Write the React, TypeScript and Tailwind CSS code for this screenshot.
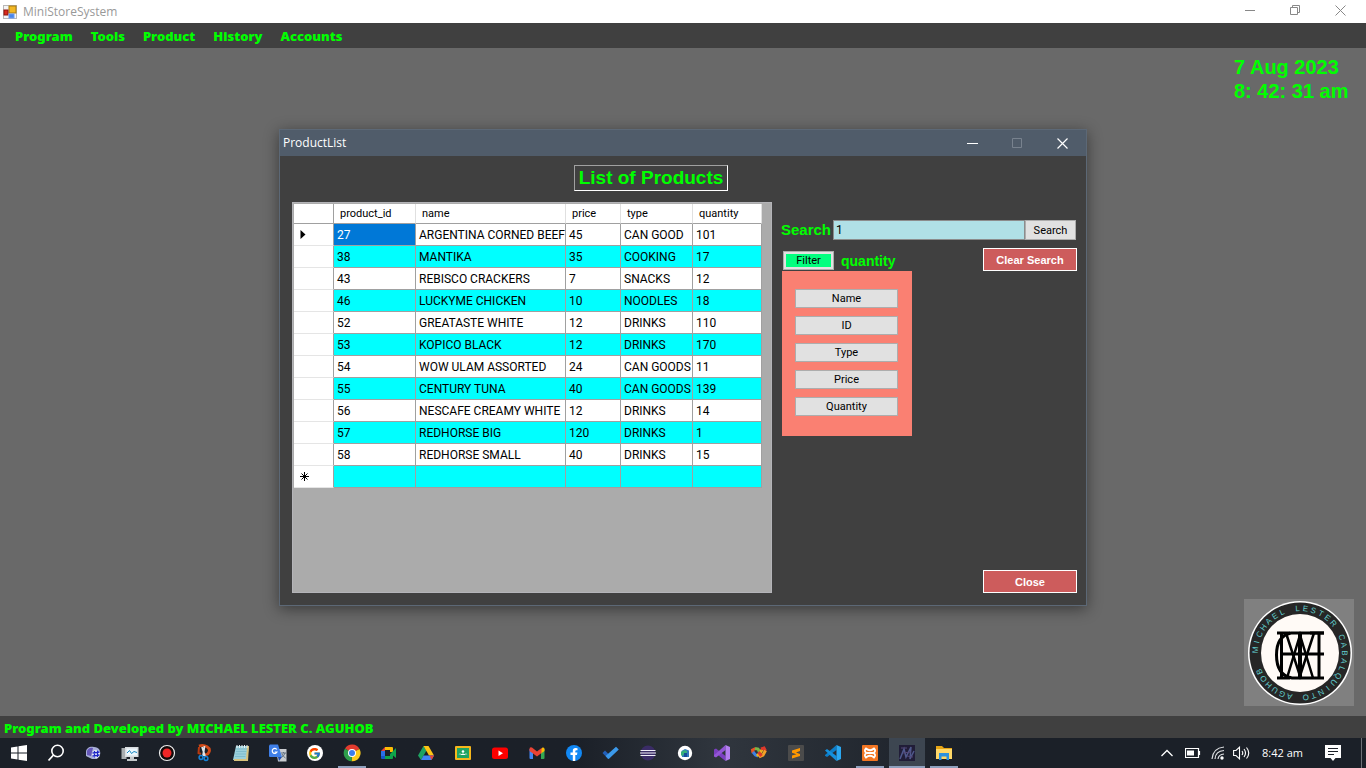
import type { ReactNode } from "react";
import { FcGoogle } from "react-icons/fc";

const menuItems = ["Program", "Tools", "Product", "History", "Accounts"];

const products = [
  ["27", "ARGENTINA CORNED BEEF", "45", "CAN GOOD", "101"],
  ["38", "MANTIKA", "35", "COOKING", "17"],
  ["43", "REBISCO CRACKERS", "7", "SNACKS", "12"],
  ["46", "LUCKYME CHICKEN", "10", "NOODLES", "18"],
  ["52", "GREATASTE WHITE", "12", "DRINKS", "110"],
  ["53", "KOPICO BLACK", "12", "DRINKS", "170"],
  ["54", "WOW ULAM ASSORTED", "24", "CAN GOODS", "11"],
  ["55", "CENTURY TUNA", "40", "CAN GOODS", "139"],
  ["56", "NESCAFE CREAMY WHITE", "12", "DRINKS", "14"],
  ["57", "REDHORSE BIG", "120", "DRINKS", "1"],
  ["58", "REDHORSE SMALL", "40", "DRINKS", "15"],
  ["", "", "", "", ""],
];

const columns = ["product_id", "name", "price", "type", "quantity"];
const filters = ["Name", "ID", "Type", "Price", "Quantity"];

function AppIcon() {
  return (
    <svg width="14" height="14" viewBox="0 0 14 14" aria-hidden="true">
      <rect x="0.5" y="0.5" width="13" height="13" fill="#f4f4f4" stroke="#b8b8b8" />
      <rect x="6" y="1" width="7" height="7" fill="#f2b824" stroke="#a87a10" />
      <rect x="1" y="5" width="4" height="5" fill="#d9281c" stroke="#8e140c" />
      <rect x="6" y="9" width="5" height="4" fill="#4a86e8" stroke="#6a9af0" />
    </svg>
  );
}

function Logo() {
  const ring = "MICHAEL LESTER CABALQUINTO AGUHOB";
  return (
    <svg width="110" height="107" viewBox="0 0 110 107" role="img" aria-label={ring}>
      <rect width="110" height="107" fill="#808080" />
      <circle cx="56" cy="54" r="52" fill="#ffffff" />
      <circle cx="56" cy="54" r="50.5" fill="#262626" />
      <circle cx="56" cy="54" r="39" fill="#fffaf6" />
      <g
        fill="#62cccc"
        fontFamily="Liberation Sans, sans-serif"
        fontSize="8"
        textAnchor="middle"
      >
        {ring.split("").map((ch, i) => (
          <text key={i} x="56" y="12" transform={`rotate(${-86 + i * 10.35} 56 54)`}>
            {ch}
          </text>
        ))}
      </g>
      <g fill="none" stroke="#000" strokeWidth="3">
        <path d="M37.500 33V79M75 33V79" />
        <path d="M33 34H46M66 34H80M33 79H46" strokeWidth="3" />
        <path d="M38 55H80" />
        <path d="M80 34H47C37 36 32.500 44 32.500 56S37 77 48 79H80" />
        <path d="M42 34L56 77L70 34" strokeWidth="2.500" />
        <path d="M43 79L56 36L69 79" strokeWidth="2.500" />
        <path d="M56 34V79" strokeWidth="4" />
      </g>
    </svg>
  );
}

function Ico({ children, size = 18 }: { children: ReactNode; size?: number }) {
  return (
    <svg width={size} height={size} viewBox="0 0 18 18" aria-hidden="true">
      {children}
    </svg>
  );
}

type Task = { name: string; icon: ReactNode; open?: boolean; active?: boolean };

const tasks: Task[] = [
  {
    name: "Start",
    icon: (
      <Ico>
        <path fill="#fff" d="M1 3.500L7.500 2.500V8.500H1zM8.500 2.300L17 1V8.500H8.500zM1 9.500H7.500V15.500L1 14.500zM8.500 9.500H17V17L8.500 15.700z" />
      </Ico>
    ),
  },
  {
    name: "Find",
    icon: (
      <Ico>
        <circle cx="10.500" cy="7" r="5.700" fill="none" stroke="#fff" strokeWidth="1.600" />
        <path d="M6.500 11L1.500 16.500" stroke="#fff" strokeWidth="1.800" />
      </Ico>
    ),
  },
  {
    name: "System tools",
    icon: (
      <Ico>
        <path d="M2 8C2 4 6 2 10 3C15 3 17 7 16 11L13 15H8L2 12z" fill="#a9b0d8" />
        <path d="M3 7Q5 3 9 4L7 12L3 11z" fill="#6557b8" />
        <circle cx="12" cy="10" r="4" fill="#e6e9f4" />
        <path d="M10.500 7V13.500M13.500 6.500V13M8.500 9L15.500 8M8.500 12L15.500 11" stroke="#1c25c8" strokeWidth="1.300" />
      </Ico>
    ),
  },
  {
    name: "Performance",
    icon: (
      <Ico>
        <rect x="0.5" y="4" width="5" height="11" fill="#a8adb0" />
        <rect x="4" y="3" width="13.500" height="10" fill="#d9dde0" />
        <rect x="5.500" y="4.500" width="10.500" height="7" fill="#eef8fd" />
        <path d="M6 9L8.500 6.500L10.500 9.500L13 7.500L16 8.500" fill="none" stroke="#1585c0" />
        <path d="M9 13H13V15H16V17H6V15H9z" fill="#c4c8ca" />
      </Ico>
    ),
  },
  {
    name: "Recorder",
    icon: (
      <Ico>
        <circle cx="9" cy="9" r="7.500" fill="#120a0a" stroke="#eee" strokeWidth="1.200" />
        <circle cx="9" cy="9" r="4.500" fill="#f02626" />
      </Ico>
    ),
  },
  {
    name: "Snipping tool",
    icon: (
      <Ico>
        <path d="M4 2C10 0 16 4 14 8C13 11 10 11 9 10" fill="none" stroke="#d24a18" strokeWidth="2.800" />
        <path d="M7 3L10 12M9.500 2L8 12" stroke="#dfe4e8" strokeWidth="1.800" />
        <path d="M4 3L3.500 9L6 10" fill="none" stroke="#b83a10" strokeWidth="2" />
        <circle cx="6" cy="13.500" r="1.900" fill="none" stroke="#1683d8" strokeWidth="1.500" />
        <circle cx="11" cy="14.500" r="1.900" fill="none" stroke="#1683d8" strokeWidth="1.500" />
      </Ico>
    ),
  },
  {
    name: "Notepad",
    icon: (
      <Ico>
        <path d="M4 2H17L15 16H1z" fill="#9bd0dc" />
        <path d="M15 2H17L16 17H2V15H14z" fill="#d8c27c" />
        <path d="M4.500 5H15M4 7.500H14.500M3.500 10H14M3 12.500H13.500" stroke="#7fbccd" />
        <path d="M5 1V4M7.500 1V4M10 1V4M12.500 1V4M15 1V4" stroke="#eaf3f5" />
      </Ico>
    ),
  },
  {
    name: "Translate",
    icon: (
      <Ico>
        <path d="M7 5H17.500V17.500H9z" fill="#c9ccd0" />
        <path d="M1 0.500H9L13 13H1Q0 13 0 12V1.500z" fill="#3f7fe8" />
        <path d="M9 13H13L10 17z" fill="#1d4cae" />
        <path d="M7.800 5.500A2.500 2.500 0 1 0 8 8H5.700" fill="none" stroke="#fff" strokeWidth="1.200" />
        <path d="M12 9H17M14.500 8V9M16 9Q15 12 12.500 13.500M13 10Q14 12.500 16.500 14" fill="none" stroke="#607080" />
      </Ico>
    ),
  },
  {
    name: "Google",
    icon: (
      <span className="flex size-4 items-center justify-center rounded-full bg-white">
        <FcGoogle size={13} />
      </span>
    ),
  },
  {
    name: "Chrome",
    open: true,
    icon: (
      <Ico>
        <path d="M9 9L2 4.500A8.300 8.300 0 0 1 16.500 5z" fill="#e33b2e" />
        <path d="M9 9L16.500 5A8.300 8.300 0 0 1 8.500 17.300z" fill="#fccb1b" />
        <path d="M9 9L8.500 17.300A8.300 8.300 0 0 1 2 4.500z" fill="#2d9e4b" />
        <circle cx="9" cy="9" r="4" fill="#fff" />
        <circle cx="9" cy="9" r="3" fill="#3b7ded" />
      </Ico>
    ),
  },
  {
    name: "Meet",
    icon: (
      <Ico>
        <path d="M5 3H12Q13 3 13 4V8H10V6H5z" fill="#fbbc04" />
        <path d="M5 3V7H1z" fill="#ea4335" />
        <path d="M1 7H5V12H1z" fill="#2a6fe8" />
        <path d="M1 12H5V15H2Q1 15 1 14z" fill="#1557c8" />
        <path d="M5 12H10V10L16 4V14L13 11.500V14Q13 15 12 15H5z" fill="#0fa64a" />
      </Ico>
    ),
  },
  {
    name: "Drive",
    icon: (
      <Ico>
        <path d="M6.500 2L1 11.500L4 16L9.500 6.500z" fill="#1ea362" />
        <path d="M6.500 2H11.500L17 11.500H12z" fill="#fdc414" />
        <path d="M6.500 11.500H17L14.500 16H4z" fill="#4285f4" />
        <path d="M12.500 11.500H17L14.500 16z" fill="#ea4335" />
      </Ico>
    ),
  },
  {
    name: "Classroom",
    icon: (
      <Ico>
        <rect x="1" y="2" width="16" height="14" rx="1" fill="#f6b71c" />
        <rect x="3" y="4" width="12" height="10" fill="#1fa463" />
        <circle cx="9" cy="7.500" r="1.300" fill="#fff" />
        <path d="M6 11Q9 8 12 11zM4.500 10.500Q6 9 7 10M11 10Q12 9 13.500 10.500" fill="#fff" />
      </Ico>
    ),
  },
  {
    name: "YouTube",
    icon: (
      <Ico>
        <rect x="1" y="3.500" width="16" height="11.500" rx="2.500" fill="#f00" />
        <path d="M7.500 6.500V12L12 9.200z" fill="#fff" />
      </Ico>
    ),
  },
  {
    name: "Gmail",
    icon: (
      <Ico>
        <path d="M1.500 5H5V15H2.500Q1.500 15 1.500 14z" fill="#4285f4" />
        <path d="M13 5H16.500V14Q16.500 15 15.500 15H13z" fill="#34a853" />
        <path d="M13 5L14.500 3.500Q16.500 3 16.500 5V7L13 9.500z" fill="#fbbc04" />
        <path d="M1.500 7V5Q1.500 2.500 4 3.500L9 7.500L13.500 4V9L9 12.500L5 9.500z" fill="#ea4335" />
      </Ico>
    ),
  },
  {
    name: "Facebook",
    icon: (
      <Ico>
        <circle cx="9" cy="9" r="8" fill="#1188f4" />
        <path d="M7.800 17V11H5.500V8.500H7.800V6.800Q7.800 4 10.600 4L12.500 4.200V6.200H11.400Q10.300 6.200 10.300 7.300V8.500H12.400L12 11H10.300V17z" fill="#fff" />
      </Ico>
    ),
  },
  {
    name: "To Do",
    icon: (
      <Ico>
        <path d="M0.500 9L3 6.500L8.500 12L6 14.700z" fill="#235fb8" />
        <path d="M6 14.700L3.600 12L14 2.700L16.800 5.500L7.300 14.500Q6.700 15.200 6 14.700z" fill="#3b99ea" />
      </Ico>
    ),
  },
  {
    name: "Eclipse",
    icon: (
      <Ico>
        <circle cx="9" cy="9" r="7.500" fill="#3a2c66" />
        <path d="M1.500 6.500H16.500M1 9H17M1.500 11.500H16.500" stroke="#f0eef8" strokeWidth="1.200" />
      </Ico>
    ),
  },
  {
    name: "Android emulator",
    icon: (
      <Ico>
        <circle cx="9" cy="9" r="7.200" fill="#fff" />
        <path d="M5.500 7L9 5L13 6.500V13H6z" fill="#3277bd" />
        <path d="M5 11V8Q8 5 11 7V12L9 9.500L6 12z" fill="#36b17b" />
        <path d="M8 9H11V13H8z" fill="#164c9a" />
      </Ico>
    ),
  },
  {
    name: "Visual Studio",
    icon: (
      <Ico>
        <path d="M1 5.500L3 4.500L12.500 12V17L3 9.500V11.500L1 12.500z" fill="#7b3fc0" />
        <path d="M12.500 1V6L3 13.500L1 12.500V11L3 9.500z" fill="#9355d6" />
        <path d="M12.500 1L17 3V15L12.500 17z" fill="#b47ff0" />
      </Ico>
    ),
  },
  {
    name: "Office tools",
    icon: (
      <Ico>
        <g fill="none" strokeWidth="3">
          <path d="M3 9L2.500 6L5.500 4.500" stroke="#e85525" />
          <path d="M5 4.500L8 5L9.500 8" stroke="#7ab648" />
          <path d="M3 8L5.500 11L8 12" stroke="#3e80e2" />
          <path d="M7 12L10 9L12.500 5" stroke="#efb71c" />
          <path d="M11 5L14 4L15.500 7" stroke="#de392b" />
          <path d="M15.500 6.500L13 11L9 13" stroke="#f4a227" />
          <path d="M8.500 8L11.500 12" stroke="#de392b" />
        </g>
      </Ico>
    ),
  },
  {
    name: "Sublime Text",
    icon: (
      <Ico>
        <rect x="1" y="1" width="16" height="16" rx="1" fill="#4b4b4b" />
        <path d="M5 6.500L13 4V7L9 8.500L13 10V12L5 14.500V11.500L9.500 10.200L5 8.800z" fill="#ff9800" />
      </Ico>
    ),
  },
  {
    name: "Visual Studio Code",
    icon: (
      <Ico>
        <path d="M12.500 1V6L3 13L1 11.800V11z" fill="#0c7dc8" />
        <path d="M1 6.500L3 5L12.500 12V17z" fill="#1590dc" />
        <path d="M12.500 1L17 3V15L12.500 17z" fill="#2aa8f2" />
      </Ico>
    ),
  },
  {
    name: "XAMPP",
    open: true,
    icon: (
      <Ico>
        <rect x="1" y="1" width="16" height="16" rx="1" fill="#f37623" />
        <path d="M5 4.500Q9 8 13 4.500Q15.500 7 12.500 9Q15.500 11 13 13.500Q9 10 5 13.500Q2.500 11 5.500 9Q2.500 7 5 4.500zM6 9H12" fill="none" stroke="#fff" strokeWidth="1.800" />
      </Ico>
    ),
  },
  {
    name: "MiniStoreSystem",
    active: true,
    icon: (
      <Ico>
        <rect x="1" y="1" width="16" height="16" fill="#211d38" />
        <path d="M2 15L6 5L8 13L13 3L12 15L16 7" fill="none" stroke="#4f588c" strokeWidth="1.500" />
        <path d="M3 4H9M9 12L15 13M5 9L13 8" stroke="#554879" />
      </Ico>
    ),
  },
  {
    name: "File Explorer",
    open: true,
    icon: (
      <Ico>
        <path d="M1 2H7L9 4H17V7H1z" fill="#e6a515" />
        <path d="M1 5H17V15H1z" fill="#ffd868" />
        <path d="M4 9H14V16H11.500V12.500H6.500V16H4z" fill="#2c91df" />
      </Ico>
    ),
  },
];

function ClassicButton({ children, className = "" }: { children: ReactNode; className?: string }) {
  return (
    <button
      type="button"
      className={`flex items-center justify-center border border-[#adadad] bg-[#e1e1e1] pt-px text-[11px] leading-4 text-black ${className}`}
    >
      {children}
    </button>
  );
}

function RedButton({ children }: { children: ReactNode }) {
  return (
    <button
      type="button"
      className="h-[23px] w-[94px] border border-white bg-[#cd5c5c] font-['Liberation_Sans',sans-serif] text-[11px] leading-4 font-bold text-white"
    >
      {children}
    </button>
  );
}

function ProductTable() {
  return (
    <div className="w-[480px] shrink-0 self-stretch border border-[#b4b4b8] bg-[#ababab] pt-px pl-px">
      <table className="table-fixed border-separate border-spacing-0 bg-white text-left text-xs leading-4 text-black">
        <colgroup>
          <col className="w-10" />
          <col className="w-[82px]" />
          <col className="w-[150px]" />
          <col className="w-[55px]" />
          <col className="w-[72px]" />
          <col className="w-[69px]" />
        </colgroup>
        <thead>
          <tr className="h-5">
            <th className="border-r border-b border-[#a0a0a0] p-0" aria-label="Row" />
            {columns.map((c) => (
              <th
                key={c}
                scope="col"
                className="border-r border-b border-r-[#e0e0e0] border-b-[#a0a0a0] pt-px pr-0 pb-0 pl-1.5 text-[11px] font-normal"
              >
                {c}
              </th>
            ))}
          </tr>
        </thead>
        <tbody>
          {products.map((row, r) => (
            <tr key={r} className={r % 2 ? "h-[22px] bg-[#00ffff]" : "h-[22px] bg-white"}>
              <td className="border-r border-b border-r-[#a0a0a0] border-b-[#e5e5e5] bg-white py-0 pr-0 pl-1.5">
                {r === 0 && (
                  <svg width="6" height="9" viewBox="0 0 6 9" aria-hidden="true">
                    <path d="M0.500 0L5.500 4.500L0.500 9z" fill="#000" />
                  </svg>
                )}
                {r === products.length - 1 && (
                  <svg width="9" height="9" viewBox="0 0 9 9" aria-hidden="true">
                    <path d="M4.500 0V9M0 4.500H9M1.500 1.500L7.500 7.500M7.500 1.500L1.500 7.500" stroke="#000" />
                  </svg>
                )}
              </td>
              {row.map((cell, c) => (
                <td
                  key={c}
                  className={
                    r === 0 && c === 0
                      ? "border-r border-b border-[#a0a0a0] bg-[#0078d7] py-0 pr-0 pl-[3px] text-white"
                      : "border-r border-b border-[#a0a0a0] py-0 pr-0 pl-[3px] whitespace-nowrap"
                  }
                >
                  {cell}
                </td>
              ))}
            </tr>
          ))}
        </tbody>
      </table>
    </div>
  );
}

function ProductWindow() {
  return (
    <section
      aria-label="ProductList"
      className="absolute top-[81px] left-1/2 flex h-[477px] w-[808px] -translate-x-1/2 flex-col border border-[#5c6876] bg-[#404040] shadow-[0_3px_14px_rgba(0,0,0,0.45)]"
    >
      <header className="flex h-[26px] shrink-0 items-center justify-between bg-[#505c6a] pl-[3px] text-white">
        <h2 className="font-['Open_Sans',sans-serif] text-xs leading-4">ProductList</h2>
        <div className="flex pr-px">
          <button type="button" aria-label="Minimize" className="flex h-6 w-[45px] items-center justify-center">
            <svg width="11" height="11" viewBox="0 0 11 11"><path d="M0 5.500H11" stroke="#fff" /></svg>
          </button>
          <button type="button" aria-label="Maximize" disabled className="flex h-6 w-[45px] items-center justify-center">
            <svg width="11" height="11" viewBox="0 0 11 11"><path d="M.5 .5H9.500V9.500H.5z" fill="none" stroke="#78828e" /></svg>
          </button>
          <button type="button" aria-label="Close window" className="flex h-6 w-[45px] items-center justify-center">
            <svg width="11" height="11" viewBox="0 0 11 11"><path d="M.5 .5L10.500 10.500M10.500 .5L.5 10.500" stroke="#fff" strokeWidth="1.200" /></svg>
          </button>
        </div>
      </header>
      <div className="flex min-h-0 flex-1 flex-col pt-[9px] pr-[9px] pb-3 pl-3">
        <h1 className="ml-[282px] flex h-[26px] w-[154px] items-center justify-center border border-t-[#a0a0a0] border-r-white border-b-white border-l-[#a0a0a0] font-['Liberation_Sans',sans-serif] text-[19px] leading-6 font-bold whitespace-nowrap text-[#00ff00]">
          List of Products
        </h1>
        <div className="mt-[11px] flex min-h-0 flex-1 justify-between">
          <ProductTable />
          <div className="flex w-[297px] flex-col pt-[18px]">
            <form className="flex items-center" onSubmit={(e) => e.preventDefault()}>
              <label
                htmlFor="search"
                className="w-[53px] pl-px font-['Liberation_Sans',sans-serif] text-[15px] leading-5 font-bold text-[#00ff00]"
              >
                Search
              </label>
              <input
                id="search"
                defaultValue="1"
                className="h-5 min-w-0 flex-1 border border-white bg-[#b0e0e6] px-0.5 text-xs leading-4 text-black outline-1 -outline-offset-1 outline-[#8c8c8c]"
              />
              <ClassicButton className="mr-px h-5 w-[51px]">Search</ClassicButton>
            </form>
            <div className="flex justify-between pt-2">
              <div className="flex items-center self-end pb-px pl-[3px]">
                <button
                  type="button"
                  className="h-[19px] w-[51px] border border-[#adadad] bg-[#e1e1e1] p-0.5 text-[11px] text-black"
                >
                  <span className="flex h-[13px] items-center justify-center bg-[#00ff7f] pt-px leading-3">Filter</span>
                </button>
                <span className="pl-[7px] font-['Liberation_Sans',sans-serif] text-[14px] leading-4 font-bold text-[#00ff00]">
                  quantity
                </span>
              </div>
              <RedButton>Clear Search</RedButton>
            </div>
            <div className="ml-0.5 flex w-[130px] flex-col gap-2 bg-[#fa8072] pt-[18px] pr-3.5 pb-5 pl-[13px]">
              {filters.map((f) => (
                <ClassicButton key={f} className="h-[19px]">
                  {f}
                </ClassicButton>
              ))}
            </div>
            <div className="mt-auto self-end">
              <RedButton>Close</RedButton>
            </div>
          </div>
        </div>
      </div>
    </section>
  );
}

function Taskbar() {
  return (
    <nav aria-label="Taskbar" className="flex h-[30px] shrink-0 items-stretch justify-between bg-[#1b2028] text-white">
      <div className="flex bg-linear-to-r from-[#1b2028] from-60% via-[#30363e] via-75% to-[#1b2028]">
        {tasks.map((t) => (
          <button key={t.name} type="button" aria-label={t.name} className="flex w-[37px] flex-col items-center">
            <span
              className={
                t.active
                  ? "flex h-7 w-9 items-center justify-center bg-[#3d4651] pt-0.5"
                  : "flex h-7 w-9 items-center justify-center pt-0.5"
              }
            >
              {t.icon}
            </span>
            {t.active && <span className="h-0.5 w-9 bg-[#8ea0bd]" />}
            {t.open && <span className="h-0.5 w-7 bg-[#8ea0bd]" />}
          </button>
        ))}
      </div>
      <div className="flex items-stretch">
        <div className="flex items-center">
          <button type="button" aria-label="Show hidden icons">
            <svg width="12" height="8" viewBox="0 0 12 8"><path d="M.5 7L6 1.500L11.500 7" fill="none" stroke="#fff" strokeWidth="1.300" /></svg>
          </button>
          <svg className="ml-3" width="16" height="10" viewBox="0 0 16 10" aria-label="Battery">
            <path d="M.5 .5H13.500V9.500H.5zM14.500 3V7" fill="none" stroke="#fff" strokeWidth="1.200" />
            <path d="M2 2.500H9V7.500H2z" fill="#fff" />
          </svg>
          <svg className="ml-2.5" width="14" height="14" viewBox="0 0 14 14" aria-label="Network">
            <path d="M1 13Q2 2 13 1M4 13Q4.500 5 13 4.500M7 13Q7.500 8.500 13 8" fill="none" stroke="#dfe1e4" strokeWidth="1.200" />
            <circle cx="11" cy="12" r="1.700" fill="#fff" />
          </svg>
          <svg className="ml-2" width="17" height="14" viewBox="0 0 17 14" aria-label="Volume">
            <path d="M.6 4.500H3L6.500 1.200V12.800L3 9.500H.6zM9 5Q10.500 7 9 9M11 3Q14 7 11 11M13.500 1.500Q18 7 13.500 12.500" fill="none" stroke="#fff" strokeWidth="1.100" />
          </svg>
          <time className="ml-3 font-['Open_Sans',sans-serif] text-[11px] leading-4">8:42 am</time>
          <button type="button" aria-label="Notifications" className="ml-[22px]">
            <svg width="16" height="16" viewBox="0 0 16 16">
              <path d="M0 0H16V13H10.500L8 16L5.500 13H0z" fill="#fff" />
              <path d="M3 3.500H13M3 6.500H13M3 9.500H9" stroke="#1b2028" />
            </svg>
          </button>
        </div>
        <button type="button" aria-label="Show desktop" className="ml-5 w-[5px] border-l border-[#6d7177]" />
      </div>
    </nav>
  );
}

export default function App() {
  return (
    <div className="flex h-screen flex-col overflow-hidden bg-[#696969] font-[Roboto,sans-serif]">
      <header className="flex h-[23px] shrink-0 items-center bg-white pr-5 pl-[3px] text-[#999999]">
        <AppIcon />
        <span className="ml-1.5 font-['Open_Sans',sans-serif] text-xs leading-4">MiniStoreSystem</span>
        <div className="mb-0.5 ml-auto flex items-center gap-[35px]">
          <button type="button" aria-label="Minimize">
            <svg className="block" width="10" height="11" viewBox="0 0 10 11"><path d="M0 5.500H10" stroke="#888" /></svg>
          </button>
          <button type="button" aria-label="Restore">
            <svg className="block" width="10" height="11" viewBox="0 0 10 11"><path d="M.5 2.500H7.500V9.500H.5zM2.500 2.500V.5H9.500V7.500H7.500" fill="none" stroke="#888" /></svg>
          </button>
          <button type="button" aria-label="Close">
            <svg className="block" width="11" height="11" viewBox="0 0 11 11"><path d="M.5 .5L10.500 10.500M10.500 .5L.5 10.500" stroke="#888" /></svg>
          </button>
        </div>
      </header>
      <nav
        aria-label="Main menu"
        className="flex h-[25px] shrink-0 items-center gap-[18px] bg-[#404040] pl-[15px] font-['Noto_Sans','Open_Sans',sans-serif] text-[13px] leading-5 font-black text-[#00ff00]"
      >
        {menuItems.map((m) => (
          <button key={m} type="button">
            {m}
          </button>
        ))}
      </nav>
      <main className="relative flex min-h-0 flex-1 flex-col items-end justify-between pt-[7px] pr-3 pb-2.5">
        <div className="w-[120px] font-['Liberation_Sans',sans-serif] text-xl leading-6 font-bold whitespace-nowrap text-[#00ff00]">
          <p>7 Aug 2023</p>
          <p>8: 42: 31 am</p>
        </div>
        <Logo />
        <ProductWindow />
      </main>
      <footer className="flex h-[22px] shrink-0 items-center bg-[#404040] pt-0.5 pl-1 font-['Noto_Sans','Open_Sans',sans-serif] text-[13px] leading-5 font-black text-[#00ff00]">
        Program and Developed by MICHAEL LESTER C. AGUHOB
      </footer>
      <Taskbar />
    </div>
  );
}
